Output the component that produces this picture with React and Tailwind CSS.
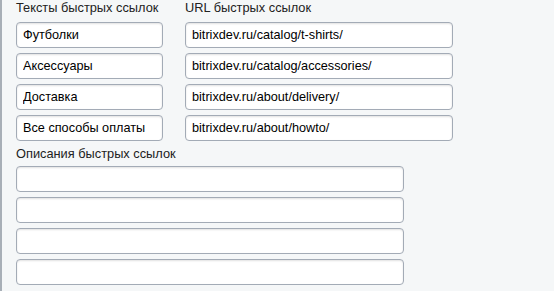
const links = [
  { text: "Футболки", url: "bitrixdev.ru/catalog/t-shirts/" },
  { text: "Аксессуары", url: "bitrixdev.ru/catalog/accessories/" },
  { text: "Доставка", url: "bitrixdev.ru/about/delivery/" },
  { text: "Все способы оплаты", url: "bitrixdev.ru/about/howto/" },
];

const inputCls =
  "h-[26px] rounded-[4px] border border-[#a3abb6] bg-white px-[6px] text-[12.7px] text-black shadow-[inset_0_1px_2px_rgba(0,0,0,0.12)] outline-none";

export default function App() {
  return (
    <div
      className="h-[291px] w-[554px] border-l-2 border-[#a8afb7] bg-[#f5f7f8] pl-[14px] text-[12.8px] text-[#222]"
      style={{ fontFamily: '"Liberation Sans", Arial, sans-serif' }}
    >
      <div className="flex gap-[22px]">
        <div className="flex w-[147px] flex-col">
          <div className="mb-[6px] h-[16px] leading-[16px]">Тексты быстрых ссылок</div>
          <div className="flex flex-col gap-[5px]">
            {links.map((l) => (
              <input key={l.text} defaultValue={l.text} className={inputCls} />
            ))}
          </div>
        </div>
        <div className="flex w-[268px] flex-col">
          <div className="mb-[6px] h-[16px] leading-[16px]">URL быстрых ссылок</div>
          <div className="flex flex-col gap-[5px]">
            {links.map((l) => (
              <input key={l.url} defaultValue={l.url} className={inputCls} />
            ))}
          </div>
        </div>
      </div>
      <div className="mt-[5px] mb-[4px] h-[16px] leading-[16px]">Описания быстрых ссылок</div>
      <div className="flex w-[388px] flex-col gap-[5px]">
        {links.map((l) => (
          <input key={l.text} defaultValue="" className={inputCls} />
        ))}
      </div>
    </div>
  );
}
